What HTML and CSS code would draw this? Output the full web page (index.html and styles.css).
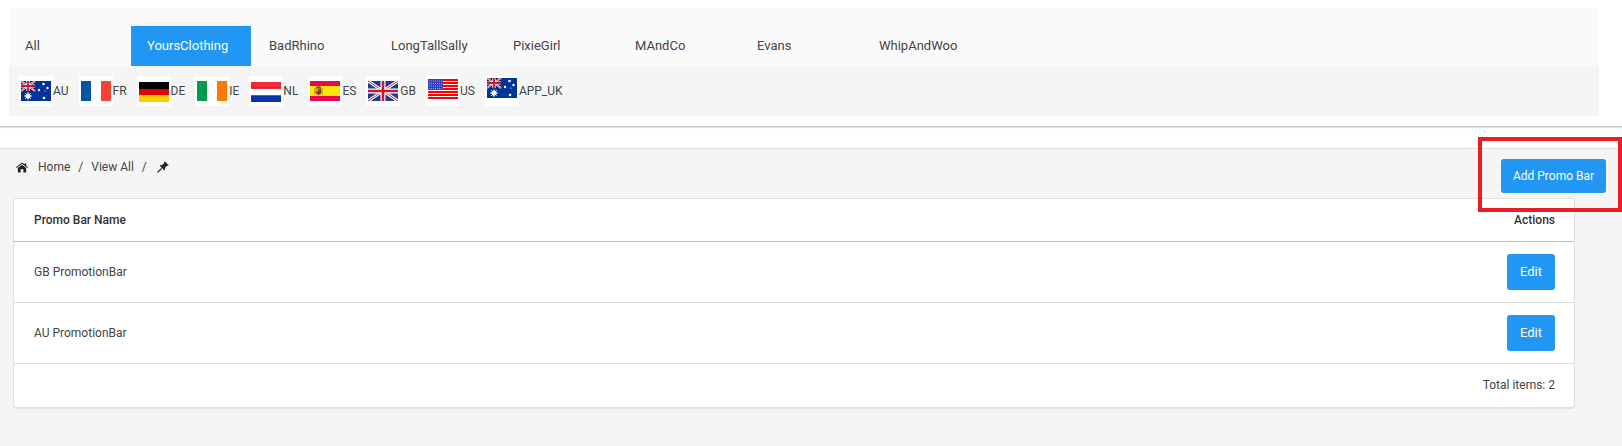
FILE: index.html
```html
<!DOCTYPE html>
<html lang="en">
<head>
<meta charset="utf-8">
<title>Promo Bars</title>
<link rel="stylesheet" href="styles.css">
</head>
<body>
<svg class="defs" width="0" height="0" aria-hidden="true">
  <defs>
    <g id="union-small">
      <rect x="0" y="0" width="14" height="10" fill="#00247d"/>
      <path d="M0 0L14 10M14 0L0 10" stroke="#fff" stroke-width="1.800"/>
      <path d="M0 0L14 10M14 0L0 10" stroke="#cf142b" stroke-width=".7"/>
      <path d="M7 0V10M0 5H14" stroke="#fff" stroke-width="3.200"/>
      <path d="M7 0V10M0 5H14" stroke="#cf142b" stroke-width="1.800"/>
    </g>
    <g id="flag-au">
      <rect width="30" height="20" fill="#00339a"/>
      <use href="#union-small"/>
      <circle cx="7" cy="15" r="2.600" fill="#fff"/>
      <path d="M7 11v8M3 15h8M4.200 12.200l5.600 5.600M9.800 12.200l-5.600 5.600" stroke="#fff" stroke-width=".8"/>
      <circle cx="22.500" cy="3" r="1.300" fill="#fff"/>
      <circle cx="18" cy="9" r="1.200" fill="#fff"/>
      <circle cx="26.500" cy="7" r="1.200" fill="#fff"/>
      <circle cx="23" cy="17" r="1.300" fill="#fff"/>
      <circle cx="24" cy="10" r=".6" fill="#fff"/>
    </g>
  </defs>
</svg>

<header class="top">
  <div class="brand-panel">
    <nav class="tabs">
      <a class="tab">All</a>
      <a class="tab tab-active">YoursClothing</a>
      <a class="tab">BadRhino</a>
      <a class="tab">LongTallSally</a>
      <a class="tab">PixieGirl</a>
      <a class="tab">MAndCo</a>
      <a class="tab">Evans</a>
      <a class="tab">WhipAndWoo</a>
    </nav>
    <div class="countries">
      <a class="country"><svg class="flag" viewBox="0 0 34 30"><rect width="34" height="30" fill="#fff"/><use href="#flag-au" x="2" y="5"/></svg>AU</a>
      <a class="country"><svg class="flag" viewBox="0 0 34 30"><rect width="34" height="30" fill="#fff"/><rect x="2" y="5" width="10" height="20" fill="#0055a4"/><rect x="22" y="5" width="10" height="20" fill="#f44336"/></svg>FR</a>
      <a class="country"><svg class="flag" viewBox="0 0 34 30"><rect width="34" height="30" fill="#fff"/><rect x="2" y="6" width="30" height="7" fill="#000"/><rect x="2" y="13" width="30" height="6" fill="#e60000"/><rect x="2" y="19" width="30" height="7" fill="#ffcc00"/></svg>DE</a>
      <a class="country"><svg class="flag" viewBox="0 0 34 30"><rect width="34" height="30" fill="#fff"/><rect x="2" y="5" width="10" height="20" fill="#009b4e"/><rect x="22" y="5" width="10" height="20" fill="#ff7900"/></svg>IE</a>
      <a class="country"><svg class="flag" viewBox="0 0 34 30"><rect width="34" height="30" fill="#fff"/><rect x="2" y="6" width="30" height="7" fill="#ef2b37"/><rect x="2" y="11" width="30" height="1" fill="#d8202c"/><rect x="2" y="19" width="30" height="7" fill="#0a34a8"/><rect x="2" y="19" width="30" height="1" fill="#4a66bc"/></svg>NL</a>
      <a class="country"><svg class="flag" viewBox="0 0 34 30"><rect width="34" height="30" fill="#fff"/><rect x="2" y="5" width="30" height="20" fill="#e30a4e"/><rect x="2" y="10" width="30" height="10" fill="#ffe600"/><path d="M8 11.500L9 10L10.500 10.800L12 10L13 11.500V12.500H8Z" fill="#9a3a20"/><path d="M8 12.500H13V17L10.500 19.500L8 17Z" fill="#a52a1e"/><rect x="8" y="12.500" width="2.500" height="3" fill="#c9a23a"/><rect x="10.500" y="15" width="2.500" height="2.500" fill="#6e3b1c"/><rect x="6.500" y="12" width="1" height="6.500" fill="#7f7a5a"/><rect x="13.500" y="12" width="1" height="6.500" fill="#7f7a5a"/></svg>ES</a>
      <a class="country"><svg class="flag" viewBox="0 0 34 30"><rect width="34" height="30" fill="#fff"/><g transform="translate(2 5)"><rect width="30" height="20" fill="#153f95"/><path d="M0 0L30 20M30 0L0 20" stroke="#fff" stroke-width="3"/><path d="M0 0L30 20M30 0L0 20" stroke="#cf2a3a" stroke-width="1"/><path d="M15 0V20M0 10H30" stroke="#fff" stroke-width="5"/><path d="M15 0V20M0 10H30" stroke="#cf142b" stroke-width="2.600"/></g></svg>GB</a>
      <a class="country"><svg class="flag" viewBox="0 0 34 30"><rect width="34" height="30" fill="#fff"/><path d="M2 4h30M2 7h30M2 10h30M2 13h30M2 16h30M2 19h30M2 22h30" stroke="#f00" stroke-width="1.800"/><rect x="2" y="3" width="15" height="11" fill="#3b3bb5"/><path d="M3 5h13M3 7.500h13M3 10h13M3 12.500h13" stroke="#c8c8f0" stroke-width=".7" stroke-dasharray="1 1"/></svg>US</a>
      <a class="country"><svg class="flag" viewBox="0 0 34 30"><rect width="34" height="30" fill="#fff"/><use href="#flag-au" x="2" y="2"/></svg>APP_UK</a>
    </div>
  </div>
</header>

<main class="content">
  <div class="toolbar">
    <ol class="crumbs">
      <li class="crumb"><svg class="icon-home" viewBox="0 0 13 11"><path d="M6.500 0L9.500 2.300V.8H11V3.500L13 5.100L12.300 6L6.500 1.500L.7 6L0 5.100Z" fill="#222"/><path d="M6.500 2.600L11 6.100V11H8V7.500H5V11H2V6.100Z" fill="#222"/></svg><span>Home</span></li>
      <li class="sep">/</li>
      <li class="crumb"><span>View All</span></li>
      <li class="sep">/</li>
      <li class="crumb"><svg class="icon-pin" viewBox="0 0 13 13"><path d="M8.300 0.300L12.700 4.700L11.800 5.400L11.100 5L8.600 7.300C9 8.400 8.800 9.400 8 10.200L2.800 5C3.600 4.200 4.600 4 5.700 4.400L8 1.900L7.600 1.200Z" fill="#222"/><path d="M5 8L0.500 12.500" stroke="#222" stroke-width="1.300"/></svg></li>
    </ol>
    <button class="btn btn-add">Add Promo Bar</button>
  </div>

  <section class="card">
    <div class="row row-head">
      <span>Promo Bar Name</span>
      <span>Actions</span>
    </div>
    <div class="row">
      <span>GB PromotionBar</span>
      <button class="btn btn-edit">Edit</button>
    </div>
    <div class="row">
      <span>AU PromotionBar</span>
      <button class="btn btn-edit">Edit</button>
    </div>
    <div class="card-foot">Total items: 2</div>
  </section>
</main>

<div class="highlight"></div>
</body>
</html>
```
FILE: styles.css
```css
* {
  box-sizing: border-box;
}

html,
body {
  height: 100%;
}

body {
  margin: 0;
  position: relative;
  display: flex;
  flex-direction: column;
  background: #fff;
  color: #333;
  font-family: Roboto, "Liberation Sans", sans-serif;
  font-size: 12px;
  overflow: hidden;
}

.defs {
  position: absolute;
}

.top {
  height: 127px;
  padding: 8px 23px 0 9px;
  border-bottom: 1px solid #c4c4c4;
  box-shadow: 0 1px 1px rgba(0, 0, 0, 0.12);
}

.brand-panel {
  background: #fafafa;
}

.tabs {
  display: flex;
  gap: 2px;
  padding-top: 18px;
}

.tab {
  width: 120px;
  height: 40px;
  padding-left: 16px;
  line-height: 40px;
  font-size: 13px;
  color: #444;
}

.tab-active {
  background: #2196f3;
  color: #fff;
}

.countries {
  display: flex;
  align-items: center;
  gap: 10px;
  height: 50px;
  padding-left: 10px;
  background: #f5f5f5;
}

.country {
  display: flex;
  align-items: center;
  color: #444;
}

.flag {
  display: block;
  width: 34px;
  height: 30px;
}

.content {
  flex: 1;
  margin-top: 21px;
  border-top: 1px solid #dcdcdc;
  background: #f5f5f5;
}

.toolbar {
  display: flex;
  justify-content: space-between;
  align-items: flex-start;
  height: 49px;
  padding: 10px 16px 0;
}

.crumbs {
  display: flex;
  align-items: center;
  gap: 8px;
  margin: 0;
  padding: 1px 0 0;
  list-style: none;
  color: #444;
}

.crumb {
  display: flex;
  align-items: center;
}

.icon-home {
  width: 12px;
  height: 11px;
  margin-right: 10px;
}

.icon-pin {
  width: 12px;
  height: 12px;
  margin-left: 2px;
}

.btn {
  border: 0;
  border-radius: 3px;
  background: #2196f3;
  color: #fff;
  font-family: inherit;
  padding: 0;
}

.btn-add {
  width: 105px;
  height: 34px;
  font-size: 12px;
  font-weight: 400;
}

.btn-edit {
  width: 48px;
  height: 36px;
  padding-bottom: 1px;
  font-size: 13px;
  font-weight: 400;
}

.card {
  margin: 0 47px 0 13px;
  height: 210px;
  background: #fff;
  border: 1px solid #e0e0e0;
  border-radius: 3px;
  box-shadow: 0 1px 1px rgba(0, 0, 0, 0.08);
}

.row {
  display: flex;
  justify-content: space-between;
  align-items: center;
  height: 61px;
  padding: 0 19px 0 20px;
  border-bottom: 1px solid #dcdcdc;
  color: #444;
}

.row-head {
  height: 43px;
  padding-bottom: 1px;
  border-bottom-color: #bdbdbd;
  color: #333;
  font-weight: 500;
}

.card-foot {
  padding: 14px 19px 0 0;
  text-align: right;
  color: #444;
}

.highlight {
  position: absolute;
  left: 1478px;
  top: 137px;
  width: 144px;
  height: 75px;
  border: 4px solid #ed1c24;
}
```
